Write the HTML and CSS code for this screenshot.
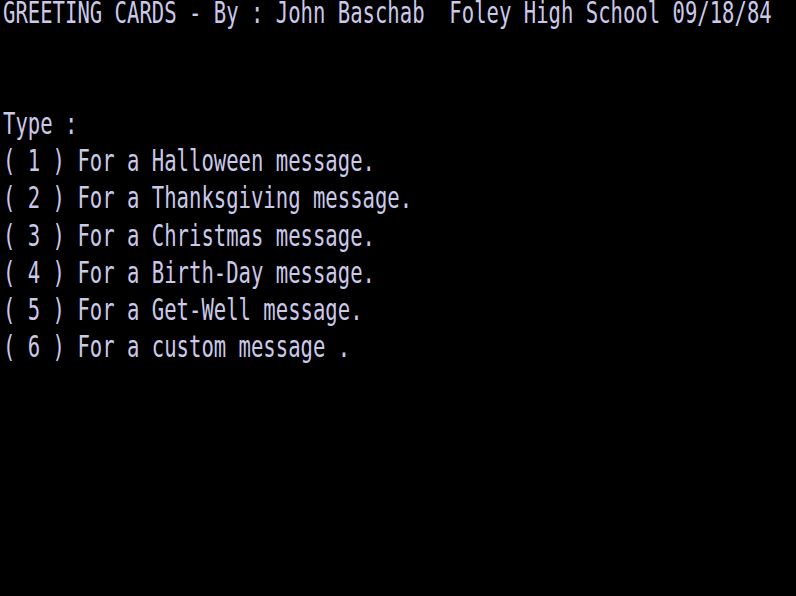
FILE: index.html
```html
<!DOCTYPE html>
<html>
<head>
<meta charset="utf-8">
<link rel="stylesheet" href="styles.css">
</head>
<body>
<div class="screen">
<div class="line">GREETING CARDS - By : John Baschab  Foley High School 09/18/84</div>
<div class="line"> </div>
<div class="line"> </div>
<div class="line">Type :</div>
<div class="line">( 1 ) For a Halloween message.</div>
<div class="line">( 2 ) For a Thanksgiving message.</div>
<div class="line">( 3 ) For a Christmas message.</div>
<div class="line">( 4 ) For a Birth-Day message.</div>
<div class="line">( 5 ) For a Get-Well message.</div>
<div class="line">( 6 ) For a custom message .</div>
</div>
</body>
</html>
```
FILE: styles.css
```css
html, body {
  margin: 0;
  padding: 0;
  background: #000;
  width: 796px;
  height: 596px;
  overflow: hidden;
}
.screen {
  font-family: "DejaVu Sans Mono", "Liberation Mono", monospace;
  font-size: 20.6px;
  color: #cbc9ea;
  padding-left: 3px;
  margin-top: -5px;
  transform: scale(1, 1.42);
  transform-origin: 0 0;
}
.line {
  white-space: pre;
  height: 26.1px;
  line-height: 26.1px;
}
```
